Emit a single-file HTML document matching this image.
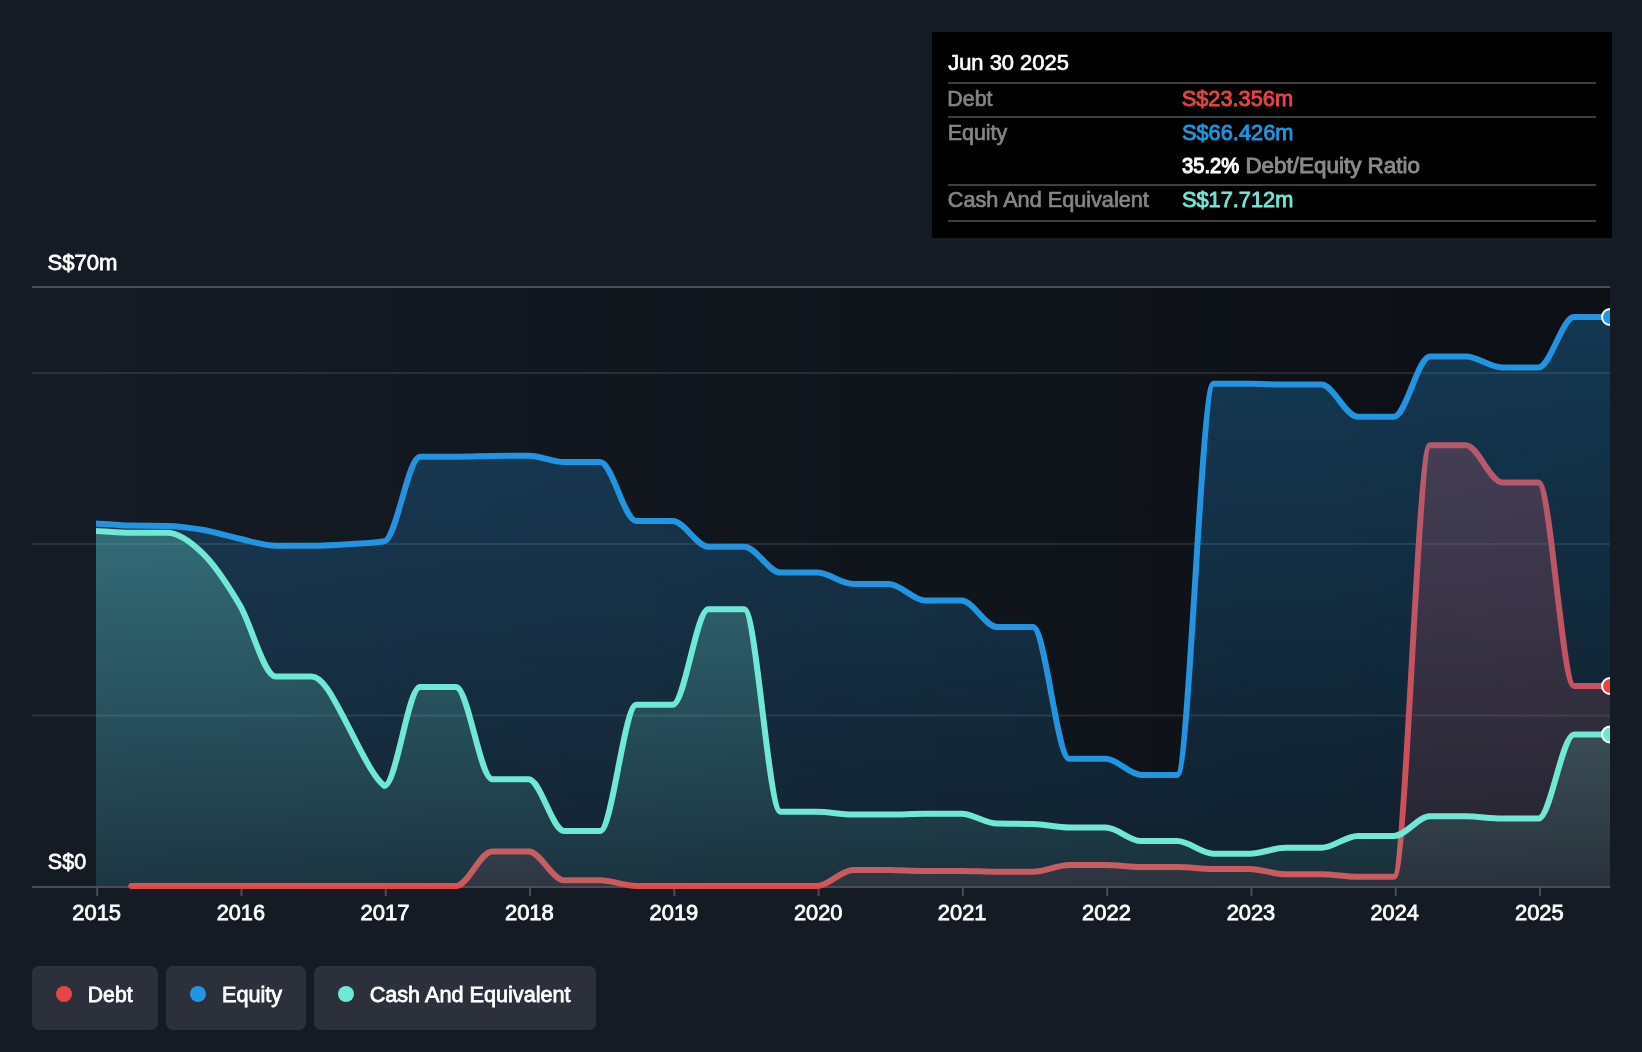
<!DOCTYPE html>
<html><head><meta charset="utf-8"><title>Debt to Equity History</title>
<style>
html,body{margin:0;padding:0;background:#151b24;}
body{width:1642px;height:1052px;overflow:hidden;font-family:"Liberation Sans", sans-serif;}
svg{display:block;}
text{font-family:"Liberation Sans", sans-serif;font-size:22px;}
</style></head><body>
<svg width="1642" height="1052" viewBox="0 0 1642 1052">
<defs>
<linearGradient id="bg" x1="0" y1="0" x2="1" y2="0"><stop offset="0" stop-color="#000" stop-opacity="0"/><stop offset="1" stop-color="#000" stop-opacity="0.42"/></linearGradient>
<linearGradient id="gE" x1="0" y1="0" x2="0" y2="1"><stop offset="0" stop-color="#2394df" stop-opacity="0.30"/><stop offset="1" stop-color="#2394df" stop-opacity="0.10"/></linearGradient>
<linearGradient id="gC" x1="0" y1="0" x2="0" y2="1"><stop offset="0" stop-color="#71e7d6" stop-opacity="0.30"/><stop offset="1" stop-color="#71e7d6" stop-opacity="0.08"/></linearGradient>
<linearGradient id="gD" x1="0" y1="0" x2="0" y2="1"><stop offset="0" stop-color="#e64545" stop-opacity="0.30"/><stop offset="1" stop-color="#e64545" stop-opacity="0.10"/></linearGradient>
<filter id="gs" x="0" y="0" width="100%" height="100%" filterUnits="userSpaceOnUse" color-interpolation-filters="sRGB"><feOffset dx="0" dy="0"/></filter>
<clipPath id="clip"><rect x="96" y="267" width="1514" height="623"/></clipPath>
</defs>
<rect x="0" y="0" width="1642" height="1052" fill="#151b24"/>
<rect x="32" y="287" width="1578" height="599" fill="url(#bg)"/>
<!-- gridlines -->
<rect x="32" y="286" width="1578" height="2" fill="#4a4f56"/>
<rect x="32" y="372" width="1578" height="2" fill="#fff" fill-opacity="0.10"/>
<rect x="32" y="543" width="1578" height="2" fill="#fff" fill-opacity="0.10"/>
<rect x="32" y="714.5" width="1578" height="2" fill="#fff" fill-opacity="0.10"/>
<g fill="#494d56"><rect x="32" y="886" width="1578" height="2"/>
<rect x="96.20" y="888" width="2" height="8"/><rect x="240.48" y="888" width="2" height="8"/><rect x="384.76" y="888" width="2" height="8"/><rect x="529.04" y="888" width="2" height="8"/><rect x="673.32" y="888" width="2" height="8"/><rect x="817.60" y="888" width="2" height="8"/><rect x="961.88" y="888" width="2" height="8"/><rect x="1106.16" y="888" width="2" height="8"/><rect x="1250.44" y="888" width="2" height="8"/><rect x="1394.72" y="888" width="2" height="8"/><rect x="1539.00" y="888" width="2" height="8"/></g>
<g clip-path="url(#clip)">
<path d="M131.27,886.00C143.25,886.00,155.23,886.00,167.21,886.00C179.32,886.00,191.44,886.00,203.55,886.00C215.66,886.00,227.77,886.00,239.88,886.00C251.86,886.00,263.84,886.00,275.83,886.00C287.81,886.00,299.79,886.00,311.77,886.00C323.88,886.00,335.99,886.00,348.10,886.00C360.21,886.00,372.33,886.00,384.44,886.00C396.29,886.00,408.14,886.00,419.99,886.00C431.97,886.00,443.95,886.00,455.93,886.00C468.04,886.00,480.15,851.40,492.26,851.40C504.38,851.40,516.49,851.40,528.60,851.40C540.45,851.40,552.30,880.30,564.15,880.30C576.13,880.30,588.11,880.30,600.09,880.30C612.20,880.30,624.31,886.00,636.42,886.00C648.54,886.00,660.65,886.00,672.76,886.00C684.61,886.00,696.46,886.00,708.31,886.00C720.29,886.00,732.27,886.00,744.25,886.00C756.36,886.00,768.47,886.00,780.58,886.00C792.70,886.00,804.81,886.00,816.92,886.00C828.90,886.00,840.88,869.90,852.86,869.90C864.84,869.90,876.82,869.97,888.80,870.10C900.92,870.23,913.03,870.90,925.14,870.90C937.25,870.90,949.36,870.90,961.48,870.90C973.32,870.90,985.17,871.80,997.02,871.80C1009.00,871.80,1020.98,871.80,1032.96,871.80C1045.08,871.80,1057.19,865.00,1069.30,865.00C1081.41,865.00,1093.52,865.00,1105.64,865.00C1117.48,865.00,1129.33,867.00,1141.18,867.00C1153.16,867.00,1165.14,867.00,1177.12,867.00C1189.24,867.00,1201.35,869.00,1213.46,869.00C1225.57,869.00,1237.68,869.00,1249.80,869.00C1261.65,869.00,1273.49,874.30,1285.34,874.30C1297.32,874.30,1309.30,874.30,1321.28,874.30C1333.40,874.30,1345.51,876.70,1357.62,876.70C1369.73,876.70,1381.84,876.70,1393.96,876.70C1405.94,876.70,1417.92,445.30,1429.90,445.30C1441.88,445.30,1453.86,445.30,1465.84,445.30C1477.95,445.30,1490.06,482.40,1502.18,482.40C1514.29,482.40,1526.40,482.40,1538.51,482.40C1550.36,482.40,1562.21,686.00,1574.06,686.00C1586.04,686.00,1598.02,686.00,1610.00,686.00L1610.00,886 L131.27,886 Z" fill="url(#gD)"/>
<path d="M131.27,886.00C143.25,886.00,155.23,886.00,167.21,886.00C179.32,886.00,191.44,886.00,203.55,886.00C215.66,886.00,227.77,886.00,239.88,886.00C251.86,886.00,263.84,886.00,275.83,886.00C287.81,886.00,299.79,886.00,311.77,886.00C323.88,886.00,335.99,886.00,348.10,886.00C360.21,886.00,372.33,886.00,384.44,886.00C396.29,886.00,408.14,886.00,419.99,886.00C431.97,886.00,443.95,886.00,455.93,886.00C468.04,886.00,480.15,851.40,492.26,851.40C504.38,851.40,516.49,851.40,528.60,851.40C540.45,851.40,552.30,880.30,564.15,880.30C576.13,880.30,588.11,880.30,600.09,880.30C612.20,880.30,624.31,886.00,636.42,886.00C648.54,886.00,660.65,886.00,672.76,886.00C684.61,886.00,696.46,886.00,708.31,886.00C720.29,886.00,732.27,886.00,744.25,886.00C756.36,886.00,768.47,886.00,780.58,886.00C792.70,886.00,804.81,886.00,816.92,886.00C828.90,886.00,840.88,869.90,852.86,869.90C864.84,869.90,876.82,869.97,888.80,870.10C900.92,870.23,913.03,870.90,925.14,870.90C937.25,870.90,949.36,870.90,961.48,870.90C973.32,870.90,985.17,871.80,997.02,871.80C1009.00,871.80,1020.98,871.80,1032.96,871.80C1045.08,871.80,1057.19,865.00,1069.30,865.00C1081.41,865.00,1093.52,865.00,1105.64,865.00C1117.48,865.00,1129.33,867.00,1141.18,867.00C1153.16,867.00,1165.14,867.00,1177.12,867.00C1189.24,867.00,1201.35,869.00,1213.46,869.00C1225.57,869.00,1237.68,869.00,1249.80,869.00C1261.65,869.00,1273.49,874.30,1285.34,874.30C1297.32,874.30,1309.30,874.30,1321.28,874.30C1333.40,874.30,1345.51,876.70,1357.62,876.70C1369.73,876.70,1381.84,876.70,1393.96,876.70C1405.94,876.70,1417.92,445.30,1429.90,445.30C1441.88,445.30,1453.86,445.30,1465.84,445.30C1477.95,445.30,1490.06,482.40,1502.18,482.40C1514.29,482.40,1526.40,482.40,1538.51,482.40C1550.36,482.40,1562.21,686.00,1574.06,686.00C1586.04,686.00,1598.02,686.00,1610.00,686.00" fill="none" stroke="#e64545" stroke-width="6" stroke-linecap="round" stroke-linejoin="round"/>
<path d="M59.39,521.60C71.50,522.16,83.61,522.72,95.72,523.40C107.57,524.06,119.42,525.40,131.27,525.60C143.25,525.80,155.23,525.70,167.21,525.90C179.32,526.10,191.44,527.85,203.55,530.00C215.66,532.15,227.77,536.17,239.88,538.80C251.86,541.40,263.84,545.70,275.83,545.70C287.81,545.70,299.79,545.70,311.77,545.70C323.88,545.70,335.99,544.95,348.10,544.20C360.21,543.45,372.33,543.20,384.44,541.20C396.29,539.24,408.14,456.70,419.99,456.70C431.97,456.70,443.95,456.70,455.93,456.70C468.04,456.70,480.15,456.17,492.26,456.00C504.38,455.83,516.49,455.70,528.60,455.70C540.45,455.70,552.30,462.10,564.15,462.10C576.13,462.10,588.11,462.10,600.09,462.10C612.20,462.10,624.31,521.00,636.42,521.00C648.54,521.00,660.65,521.00,672.76,521.00C684.61,521.00,696.46,546.70,708.31,546.70C720.29,546.70,732.27,546.70,744.25,546.70C756.36,546.70,768.47,572.60,780.58,572.60C792.70,572.60,804.81,572.60,816.92,572.60C828.90,572.60,840.88,584.00,852.86,584.00C864.84,584.00,876.82,584.00,888.80,584.00C900.92,584.00,913.03,600.60,925.14,600.60C937.25,600.60,949.36,600.60,961.48,600.60C973.32,600.60,985.17,627.00,997.02,627.00C1009.00,627.00,1020.98,627.00,1032.96,627.00C1045.08,627.00,1057.19,758.80,1069.30,758.80C1081.41,758.80,1093.52,758.80,1105.64,758.80C1117.48,758.80,1129.33,774.90,1141.18,774.90C1153.16,774.90,1165.14,774.90,1177.12,774.90C1189.24,774.90,1201.35,383.70,1213.46,383.70C1225.57,383.70,1237.68,383.70,1249.80,383.70C1261.65,383.70,1273.49,384.60,1285.34,384.60C1297.32,384.60,1309.30,384.60,1321.28,384.60C1333.40,384.60,1345.51,416.70,1357.62,416.70C1369.73,416.70,1381.84,416.70,1393.96,416.70C1405.94,416.70,1417.92,356.60,1429.90,356.60C1441.88,356.60,1453.86,356.60,1465.84,356.60C1477.95,356.60,1490.06,367.50,1502.18,367.50C1514.29,367.50,1526.40,367.50,1538.51,367.50C1550.36,367.50,1562.21,317.10,1574.06,317.10C1586.04,317.10,1598.02,317.10,1610.00,317.10L1610.00,886 L59.39,886 Z" fill="url(#gE)"/>
<path d="M59.39,521.60C71.50,522.16,83.61,522.72,95.72,523.40C107.57,524.06,119.42,525.40,131.27,525.60C143.25,525.80,155.23,525.70,167.21,525.90C179.32,526.10,191.44,527.85,203.55,530.00C215.66,532.15,227.77,536.17,239.88,538.80C251.86,541.40,263.84,545.70,275.83,545.70C287.81,545.70,299.79,545.70,311.77,545.70C323.88,545.70,335.99,544.95,348.10,544.20C360.21,543.45,372.33,543.20,384.44,541.20C396.29,539.24,408.14,456.70,419.99,456.70C431.97,456.70,443.95,456.70,455.93,456.70C468.04,456.70,480.15,456.17,492.26,456.00C504.38,455.83,516.49,455.70,528.60,455.70C540.45,455.70,552.30,462.10,564.15,462.10C576.13,462.10,588.11,462.10,600.09,462.10C612.20,462.10,624.31,521.00,636.42,521.00C648.54,521.00,660.65,521.00,672.76,521.00C684.61,521.00,696.46,546.70,708.31,546.70C720.29,546.70,732.27,546.70,744.25,546.70C756.36,546.70,768.47,572.60,780.58,572.60C792.70,572.60,804.81,572.60,816.92,572.60C828.90,572.60,840.88,584.00,852.86,584.00C864.84,584.00,876.82,584.00,888.80,584.00C900.92,584.00,913.03,600.60,925.14,600.60C937.25,600.60,949.36,600.60,961.48,600.60C973.32,600.60,985.17,627.00,997.02,627.00C1009.00,627.00,1020.98,627.00,1032.96,627.00C1045.08,627.00,1057.19,758.80,1069.30,758.80C1081.41,758.80,1093.52,758.80,1105.64,758.80C1117.48,758.80,1129.33,774.90,1141.18,774.90C1153.16,774.90,1165.14,774.90,1177.12,774.90C1189.24,774.90,1201.35,383.70,1213.46,383.70C1225.57,383.70,1237.68,383.70,1249.80,383.70C1261.65,383.70,1273.49,384.60,1285.34,384.60C1297.32,384.60,1309.30,384.60,1321.28,384.60C1333.40,384.60,1345.51,416.70,1357.62,416.70C1369.73,416.70,1381.84,416.70,1393.96,416.70C1405.94,416.70,1417.92,356.60,1429.90,356.60C1441.88,356.60,1453.86,356.60,1465.84,356.60C1477.95,356.60,1490.06,367.50,1502.18,367.50C1514.29,367.50,1526.40,367.50,1538.51,367.50C1550.36,367.50,1562.21,317.10,1574.06,317.10C1586.04,317.10,1598.02,317.10,1610.00,317.10" fill="none" stroke="#2394df" stroke-width="6" stroke-linecap="round" stroke-linejoin="round"/>
<path d="M59.39,529.50C71.50,529.93,83.61,530.36,95.72,530.90C107.57,531.43,119.42,532.70,131.27,532.70C143.25,532.70,155.23,532.70,167.21,532.70C179.32,532.70,191.44,542.10,203.55,554.20C215.66,566.30,227.77,584.77,239.88,605.30C251.86,625.61,263.84,676.50,275.83,676.50C287.81,676.50,299.79,676.50,311.77,676.50C323.88,676.50,335.99,703.19,348.10,726.20C360.21,749.21,372.33,776.21,384.44,785.90C396.29,785.90,408.14,687.00,419.99,687.00C431.97,687.00,443.95,687.00,455.93,687.00C468.04,687.00,480.15,779.20,492.26,779.20C504.38,779.20,516.49,779.20,528.60,779.20C540.45,779.20,552.30,830.90,564.15,830.90C576.13,830.90,588.11,830.90,600.09,830.90C612.20,830.90,624.31,704.80,636.42,704.80C648.54,704.80,660.65,704.80,672.76,704.80C684.61,704.80,696.46,609.20,708.31,609.20C720.29,609.20,732.27,609.20,744.25,609.20C756.36,609.20,768.47,811.80,780.58,811.80C792.70,811.80,804.81,811.80,816.92,811.80C828.90,811.80,840.88,814.60,852.86,814.60C864.84,814.60,876.82,814.60,888.80,814.60C900.92,814.60,913.03,813.80,925.14,813.80C937.25,813.80,949.36,813.80,961.48,813.80C973.32,813.80,985.17,823.34,997.02,823.60C1009.00,823.87,1020.98,823.73,1032.96,824.00C1045.08,824.27,1057.19,827.50,1069.30,827.50C1081.41,827.50,1093.52,827.50,1105.64,827.50C1117.48,827.50,1129.33,841.10,1141.18,841.10C1153.16,841.10,1165.14,841.10,1177.12,841.10C1189.24,841.10,1201.35,853.70,1213.46,853.70C1225.57,853.70,1237.68,853.70,1249.80,853.70C1261.65,853.70,1273.49,847.80,1285.34,847.80C1297.32,847.80,1309.30,847.80,1321.28,847.80C1333.40,847.80,1345.51,836.00,1357.62,836.00C1369.73,836.00,1381.84,836.00,1393.96,836.00C1405.94,836.00,1417.92,816.30,1429.90,816.30C1441.88,816.30,1453.86,816.30,1465.84,816.30C1477.95,816.30,1490.06,818.60,1502.18,818.60C1514.29,818.60,1526.40,818.60,1538.51,818.60C1550.36,818.60,1562.21,734.40,1574.06,734.40C1586.04,734.40,1598.02,734.40,1610.00,734.40L1610.00,886 L59.39,886 Z" fill="url(#gC)"/>
<path d="M59.39,529.50C71.50,529.93,83.61,530.36,95.72,530.90C107.57,531.43,119.42,532.70,131.27,532.70C143.25,532.70,155.23,532.70,167.21,532.70C179.32,532.70,191.44,542.10,203.55,554.20C215.66,566.30,227.77,584.77,239.88,605.30C251.86,625.61,263.84,676.50,275.83,676.50C287.81,676.50,299.79,676.50,311.77,676.50C323.88,676.50,335.99,703.19,348.10,726.20C360.21,749.21,372.33,776.21,384.44,785.90C396.29,785.90,408.14,687.00,419.99,687.00C431.97,687.00,443.95,687.00,455.93,687.00C468.04,687.00,480.15,779.20,492.26,779.20C504.38,779.20,516.49,779.20,528.60,779.20C540.45,779.20,552.30,830.90,564.15,830.90C576.13,830.90,588.11,830.90,600.09,830.90C612.20,830.90,624.31,704.80,636.42,704.80C648.54,704.80,660.65,704.80,672.76,704.80C684.61,704.80,696.46,609.20,708.31,609.20C720.29,609.20,732.27,609.20,744.25,609.20C756.36,609.20,768.47,811.80,780.58,811.80C792.70,811.80,804.81,811.80,816.92,811.80C828.90,811.80,840.88,814.60,852.86,814.60C864.84,814.60,876.82,814.60,888.80,814.60C900.92,814.60,913.03,813.80,925.14,813.80C937.25,813.80,949.36,813.80,961.48,813.80C973.32,813.80,985.17,823.34,997.02,823.60C1009.00,823.87,1020.98,823.73,1032.96,824.00C1045.08,824.27,1057.19,827.50,1069.30,827.50C1081.41,827.50,1093.52,827.50,1105.64,827.50C1117.48,827.50,1129.33,841.10,1141.18,841.10C1153.16,841.10,1165.14,841.10,1177.12,841.10C1189.24,841.10,1201.35,853.70,1213.46,853.70C1225.57,853.70,1237.68,853.70,1249.80,853.70C1261.65,853.70,1273.49,847.80,1285.34,847.80C1297.32,847.80,1309.30,847.80,1321.28,847.80C1333.40,847.80,1345.51,836.00,1357.62,836.00C1369.73,836.00,1381.84,836.00,1393.96,836.00C1405.94,836.00,1417.92,816.30,1429.90,816.30C1441.88,816.30,1453.86,816.30,1465.84,816.30C1477.95,816.30,1490.06,818.60,1502.18,818.60C1514.29,818.60,1526.40,818.60,1538.51,818.60C1550.36,818.60,1562.21,734.40,1574.06,734.40C1586.04,734.40,1598.02,734.40,1610.00,734.40" fill="none" stroke="#71e7d6" stroke-width="6" stroke-linecap="round" stroke-linejoin="round"/>
<circle cx="1610" cy="317" r="8" fill="#2394df" stroke="#fff" stroke-width="2"/>
<circle cx="1610" cy="686" r="8" fill="#e64545" stroke="#fff" stroke-width="2"/>
<circle cx="1610" cy="734.4" r="8" fill="#71e7d6" stroke="#fff" stroke-width="2"/>
</g>
<!-- tooltip -->
<rect x="932" y="32" width="680" height="206" fill="#000"/>
<g fill="#3f3f3f">
<rect x="948" y="82" width="648" height="2"/>
<rect x="948" y="116" width="648" height="2"/>
<rect x="948" y="184" width="648" height="2"/>
<rect x="948" y="220" width="648" height="2"/>
</g>
<!-- legend -->
<rect x="32" y="966" width="126" height="64" rx="7" fill="#2b303a"/>
<rect x="166" y="966" width="140" height="64" rx="7" fill="#2b303a"/>
<rect x="314" y="966" width="282" height="64" rx="7" fill="#2b303a"/>
<circle cx="64" cy="994" r="8" fill="#e64545"/>
<circle cx="198" cy="994" r="8" fill="#2394df"/>
<circle cx="346" cy="994" r="8" fill="#71e7d6"/>
<g id="txt" filter="url(#gs)">
<text x="948.24" y="69.50" textLength="120.60" lengthAdjust="spacingAndGlyphs" fill="#ffffff" stroke="#ffffff" stroke-width="0.7">Jun 30 2025</text>
<text x="947.34" y="105.50" textLength="45.16" lengthAdjust="spacingAndGlyphs" fill="#858585" stroke="#858585" stroke-width="0.7">Debt</text>
<text x="947.65" y="139.50" textLength="59.64" lengthAdjust="spacingAndGlyphs" fill="#858585" stroke="#858585" stroke-width="0.7">Equity</text>
<text x="947.83" y="207.30" textLength="200.97" lengthAdjust="spacingAndGlyphs" fill="#858585" stroke="#858585" stroke-width="0.7">Cash And Equivalent</text>
<text x="1181.68" y="105.50" textLength="111.35" lengthAdjust="spacingAndGlyphs" fill="#e64545" stroke="#e64545" stroke-width="0.9">S$23.356m</text>
<text x="1181.98" y="139.50" textLength="111.43" lengthAdjust="spacingAndGlyphs" fill="#2394df" stroke="#2394df" stroke-width="0.9">S$66.426m</text>
<text x="1181.99" y="207.30" textLength="111.27" lengthAdjust="spacingAndGlyphs" fill="#71e7d6" stroke="#71e7d6" stroke-width="0.9">S$17.712m</text>
<text x="1182.09" y="173.30" textLength="57.18" lengthAdjust="spacingAndGlyphs" fill="#ffffff" stroke="#ffffff" stroke-width="1.2">35.2%</text>
<text x="1245.40" y="173.30" textLength="174.60" lengthAdjust="spacingAndGlyphs" fill="#8a8a8a" stroke="#8a8a8a" stroke-width="0.9">Debt/Equity Ratio</text>
<text x="47.52" y="269.50" textLength="70.01" lengthAdjust="spacingAndGlyphs" fill="#ffffff" stroke="#ffffff" stroke-width="0.8">S$70m</text>
<text x="47.81" y="869.30" textLength="38.32" lengthAdjust="spacingAndGlyphs" fill="#ffffff" stroke="#ffffff" stroke-width="0.8">S$0</text>
<text x="72.24" y="919.60" textLength="48.83" lengthAdjust="spacingAndGlyphs" fill="#ffffff" stroke="#ffffff" stroke-width="0.8">2015</text>
<text x="216.77" y="919.60" textLength="48.19" lengthAdjust="spacingAndGlyphs" fill="#ffffff" stroke="#ffffff" stroke-width="0.8">2016</text>
<text x="360.57" y="919.60" textLength="48.92" lengthAdjust="spacingAndGlyphs" fill="#ffffff" stroke="#ffffff" stroke-width="0.8">2017</text>
<text x="504.90" y="919.60" textLength="48.95" lengthAdjust="spacingAndGlyphs" fill="#ffffff" stroke="#ffffff" stroke-width="0.8">2018</text>
<text x="649.52" y="919.60" textLength="48.76" lengthAdjust="spacingAndGlyphs" fill="#ffffff" stroke="#ffffff" stroke-width="0.8">2019</text>
<text x="793.94" y="919.60" textLength="48.51" lengthAdjust="spacingAndGlyphs" fill="#ffffff" stroke="#ffffff" stroke-width="0.8">2020</text>
<text x="937.87" y="919.60" textLength="48.60" lengthAdjust="spacingAndGlyphs" fill="#ffffff" stroke="#ffffff" stroke-width="0.8">2021</text>
<text x="1082.09" y="919.60" textLength="48.85" lengthAdjust="spacingAndGlyphs" fill="#ffffff" stroke="#ffffff" stroke-width="0.8">2022</text>
<text x="1226.65" y="919.60" textLength="48.64" lengthAdjust="spacingAndGlyphs" fill="#ffffff" stroke="#ffffff" stroke-width="0.8">2023</text>
<text x="1370.60" y="919.60" textLength="48.09" lengthAdjust="spacingAndGlyphs" fill="#ffffff" stroke="#ffffff" stroke-width="0.8">2024</text>
<text x="1514.94" y="919.60" textLength="48.85" lengthAdjust="spacingAndGlyphs" fill="#ffffff" stroke="#ffffff" stroke-width="0.8">2025</text>
<text x="87.84" y="1001.70" textLength="44.75" lengthAdjust="spacingAndGlyphs" fill="#ffffff" stroke="#ffffff" stroke-width="0.8">Debt</text>
<text x="221.97" y="1001.70" textLength="60.18" lengthAdjust="spacingAndGlyphs" fill="#ffffff" stroke="#ffffff" stroke-width="0.8">Equity</text>
<text x="369.64" y="1001.90" textLength="200.98" lengthAdjust="spacingAndGlyphs" fill="#ffffff" stroke="#ffffff" stroke-width="0.8">Cash And Equivalent</text>
</g>
</svg>
</body></html>
